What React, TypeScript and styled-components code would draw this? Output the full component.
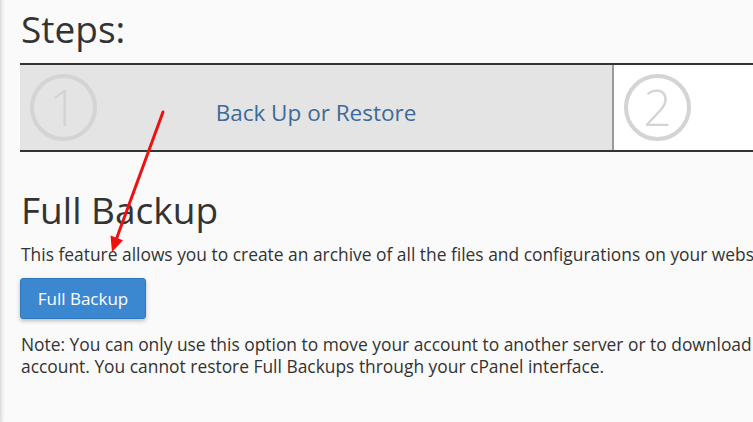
import styled, { createGlobalStyle } from "styled-components";

const GlobalStyle = createGlobalStyle`
  html, body {
    margin: 0;
    padding: 0;
    background: #fafafa;
    overflow: hidden;
  }
  body {
    font-family: "Open Sans", "Noto Sans", sans-serif;
    color: #333;
  }
`;

const Page = styled.div`
  position: relative;
  width: 753px;
  height: 422px;
  overflow: hidden;
  background: linear-gradient(to right, #d9d9d9 0, #ececec 2px, #f7f7f7 4px, #fafafa 6px);
`;

const Content = styled.div`
  width: 880px;
  padding-left: 20px;
`;

const Heading = styled.h1<{ $top: number }>`
  margin: ${(p) => p.$top}px 0 0 1px;
  font-size: 37px;
  line-height: 40px;
  font-weight: 400;
  color: #333;
`;

const Steps = styled.div`
  display: grid;
  grid-template-columns: 594px 1fr;
  margin-top: 14px;
  border-top: 2px solid #333;
  border-bottom: 2px solid #333;
  height: 85px;
`;

const Step = styled.div<{ $active?: boolean }>`
  position: relative;
  display: flex;
  align-items: center;
  justify-content: center;
  background: ${(p) => (p.$active ? "#e4e4e4" : "#fff")};
  border-right: ${(p) => (p.$active ? "2px solid #9a9a9a" : "none")};
`;

const StepNumber = styled.div`
  position: absolute;
  left: 10px;
  top: 9px;
  box-sizing: border-box;
  width: 67px;
  height: 67px;
  border: 4px solid #d4d4d4;
  border-radius: 50%;
  display: flex;
  align-items: center;
  justify-content: center;
  font-size: 50px;
  font-weight: 300;
  line-height: 1;
  color: #d4d4d4;
  padding-bottom: 2px;
`;

const StepLabel = styled.span`
  font-size: 22.5px;
  color: #3d6a99;
  margin-top: 9px;
`;

const Text = styled.p<{ $top: number }>`
  margin: ${(p) => p.$top}px 0 0 1px;
  font-size: 17.4px;
  line-height: 22px;
  color: #333;
`;

const Button = styled.button`
  display: block;
  margin-top: 13px;
  width: 126px;
  height: 41px;
  border: 1px solid #2f78bd;
  border-radius: 3px;
  background: #3c88d0;
  color: #fff;
  font-family: "Open Sans", "Noto Sans", sans-serif;
  font-size: 17px;
  box-shadow: 0 2px 4px rgba(0, 0, 0, 0.25);
  padding: 0;
`;

const Arrow = styled.svg`
  position: absolute;
  left: 0;
  top: 0;
  pointer-events: none;
`;

export default function App() {
  return (
    <Page>
      <GlobalStyle />
      <Content>
        <Heading $top={9}>Steps:</Heading>
        <Steps>
          <Step $active>
            <StepNumber>1</StepNumber>
            <StepLabel>Back Up or Restore</StepLabel>
          </Step>
          <Step>
            <StepNumber>2</StepNumber>
          </Step>
        </Steps>
        <Heading $top={38}>Full Backup</Heading>
        <Text $top={13}>
          This feature allows you to create an archive of all the files and configurations on your website.
        </Text>
        <Button>Full Backup</Button>
        <Text $top={14}>
          Note: You can only use this option to move your account to another server or to download a copy of your
          account. You cannot restore Full Backups through your cPanel interface.
        </Text>
      </Content>
      <Arrow width="753" height="422" viewBox="0 0 753 422">
        <line x1="163" y1="112" x2="116" y2="240" stroke="#f01010" strokeWidth="3" strokeLinecap="round" />
        <polygon points="112,252 110.5,235.5 123,240.2" fill="#f01010" />
      </Arrow>
    </Page>
  );
}
